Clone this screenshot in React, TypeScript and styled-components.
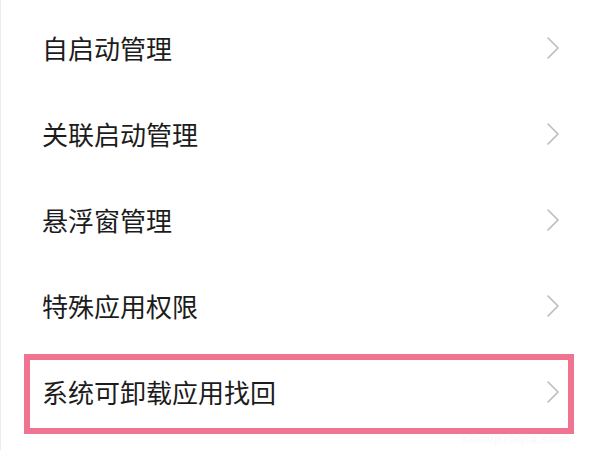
import React from 'react';
import styled, { createGlobalStyle } from 'styled-components';

const GlobalStyle = createGlobalStyle`
  html, body {
    margin: 0;
    padding: 0;
    background: #ffffff;
  }
  body {
    font-family: "Noto Sans CJK SC", "Noto Sans", sans-serif;
  }
`;

const Page = styled.div`
  width: 600px;
  height: 450px;
  overflow: hidden;
  position: relative;
  background: #ffffff;
  padding-top: 5px;
  box-sizing: border-box;
  border-left: 1px solid #ececec;
`;

const List = styled.ul`
  list-style: none;
  margin: 0;
  padding: 0;
  display: flex;
  flex-direction: column;
`;

const Row = styled.li<{ $highlighted?: boolean }>`
  position: relative;
  height: 86px;
  display: flex;
  align-items: center;
  justify-content: space-between;
  padding: 0 40px 0 41px;

  ${({ $highlighted }) =>
    $highlighted &&
    `
    &::after {
      content: '';
      position: absolute;
      left: 23px;
      right: 26px;
      top: 5px;
      bottom: 1px;
      border: 6px solid #f07392;
      pointer-events: none;
    }
  `}
`;

const Label = styled.span`
  font-size: 26px;
  line-height: 1;
  color: #1c1c1c;
  letter-spacing: 0;
`;

const Chevron = styled.svg`
  width: 14px;
  height: 22px;
  flex: none;
`;

const Watermark = styled.span`
  position: absolute;
  right: 30px;
  bottom: 4px;
  font-family: "Liberation Sans", sans-serif;
  font-size: 13px;
  color: #ffffff;
  text-shadow: 0 0 1px #e8e8e8;
  letter-spacing: 1px;
`;

const items = [
  '自启动管理',
  '关联启动管理',
  '悬浮窗管理',
  '特殊应用权限',
  '系统可卸载应用找回',
];

const Arrow = () => (
  <Chevron viewBox="0 0 14 22">
    <polyline
      points="2,1 12,11 2,21"
      fill="none"
      stroke="#bcbcbc"
      strokeWidth="1.6"
      strokeLinecap="round"
      strokeLinejoin="round"
    />
  </Chevron>
);

export default function App() {
  return (
    <>
      <GlobalStyle />
      <Page>
        <List>
          {items.map((label, i) => (
            <Row key={label} $highlighted={i === items.length - 1}>
              <Label>{label}</Label>
              <Arrow />
            </Row>
          ))}
        </List>
        <Watermark>shoujizhijia.com</Watermark>
      </Page>
    </>
  );
}
